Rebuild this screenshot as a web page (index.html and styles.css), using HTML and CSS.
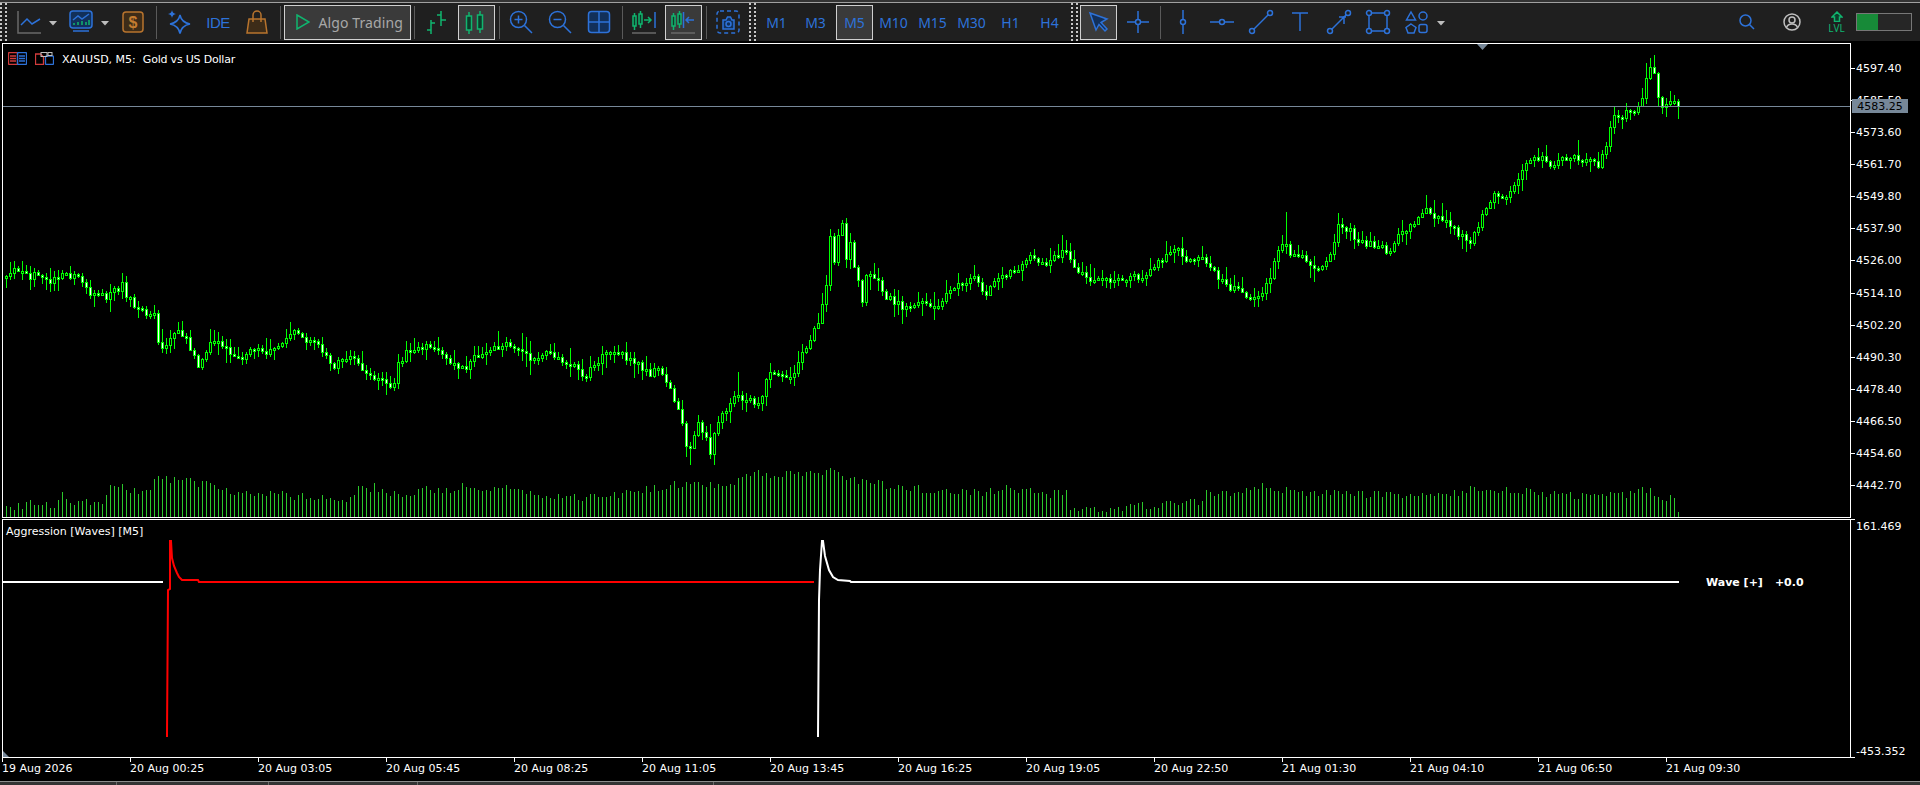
FILE: index.html
```html
<!DOCTYPE html>
<html lang="en">
<head>
    <meta charset="UTF-8">
    <title>XAUUSD, M5</title>
    <link rel="stylesheet" href="styles.css">
</head>
<body>
    <div class="topline"></div>
    <div class="toolbar">
        <div class="grip grip-first"></div>
        <div class="btn">
            <svg class="ico" viewBox="0 0 24 24"><path class="gray" d="M1 1V23H24"/><path class="blue" d="M4 15l6-6 5 5 8-5"/></svg>
        </div>
        <div class="caret"></div>
        <div class="btn">
            <svg class="ico" viewBox="0 0 24 24"><rect class="blue dark" x="1" y="1" width="22" height="17" rx="3"/><path class="green" d="M5 15v-2M9 15v-3M13 15v-4M17 15v-3M20 15v-5"/><path class="blue" d="M4 10l5-4 4 3 7-5M4 21h16"/></svg>
        </div>
        <div class="caret"></div>
        <div class="btn">
            <svg class="ico" viewBox="0 0 24 24"><rect class="orange brown" x="2" y="2" width="20" height="20" rx="3"/><text class="dollar" x="12" y="17.5">$</text></svg>
        </div>
        <div class="sep"></div>
        <div class="btn">
            <svg class="ico" viewBox="0 0 24 24"><path class="blue" d="M13 5Q14.5 12.5 23 14Q14.5 15.5 13 23.5Q11.5 15.5 3 14Q11.5 12.5 13 5z"/><path class="blue-fill" d="M5 0Q5.5 3.5 9 4Q5.5 4.5 5 8Q4.5 4.5 1 4Q4.5 3.5 5 0z"/></svg>
        </div>
        <div class="btn ide">IDE</div>
        <div class="btn">
            <svg class="ico" viewBox="0 0 24 24"><path class="orange brown" d="M4 9h16l2 14H2z"/><path class="orange" d="M8 12V5a4 4 0 0 1 8 0v7"/></svg>
        </div>
        <div class="sep"></div>
        <div class="algo">
            <svg class="play" viewBox="0 0 14 16"><path class="green" d="M1 1L13 8L1 15z"/></svg>
            <span>Algo Trading</span>
        </div>
        <div class="sep"></div>
        <div class="btn">
            <svg class="ico" viewBox="0 0 24 24"><path class="green" d="M6 10v14M6 13h4M2 20h4M16 1v15M12 5h4M16 10h5"/></svg>
        </div>
        <div class="btn">
            <div class="selected">
                <svg class="ico" viewBox="0 0 24 24"><path class="green" d="M5 2v4M5 20v4M16 1v4M16 19v4"/><rect class="green dark-green" x="2.5" y="6" width="5" height="14"/><rect class="green dark-green" x="13.5" y="5" width="5" height="14"/></svg>
            </div>
        </div>
        <div class="sep sep-tight"></div>
        <div class="btn">
            <svg class="ico" viewBox="0 0 24 24"><circle class="blue" cx="9.5" cy="9.5" r="8"/><path class="blue" d="M15.5 15.5L23 23M5.5 9.5h8M9.5 5.5v8"/></svg>
        </div>
        <div class="btn">
            <svg class="ico" viewBox="0 0 24 24"><circle class="blue" cx="9.5" cy="9.5" r="8"/><path class="blue" d="M15.5 15.5L23 23M5.5 9.5h8"/></svg>
        </div>
        <div class="btn">
            <svg class="ico" viewBox="0 0 24 24"><rect class="blue dark" x="1.5" y="1.5" width="21" height="21" rx="3"/><path class="blue" d="M12 1.5v21M1.5 12h21"/></svg>
        </div>
        <div class="sep sep-tight"></div>
        <div class="btn">
            <svg class="ico" viewBox="0 0 24 24"><path class="green" d="M2.5 3v17M8.5 1v17M12 10h7M16 7l3 3-3 3"/><rect class="green dark-green" x="1" y="6" width="3" height="10"/><rect class="green dark-green" x="7" y="4" width="3" height="10"/><path class="blue" d="M23 2v16"/><path class="gray" d="M0 23h24"/></svg>
        </div>
        <div class="btn">
            <div class="selected">
                <svg class="ico" viewBox="0 0 24 24"><path class="green" d="M2.5 3v17M8.5 1v17"/><rect class="green dark-green" x="1" y="6" width="3" height="10"/><rect class="green dark-green" x="7" y="4" width="3" height="10"/><path class="blue" d="M12.5 2v16M23 10h-8M18 7l-3 3 3 3"/><path class="gray" d="M0 23h24"/></svg>
            </div>
        </div>
        <div class="sep sep-tight"></div>
        <div class="btn">
            <svg class="ico" viewBox="0 0 24 24"><rect class="blue dashed" x="1" y="1" width="22" height="22" rx="3"/><path class="blue dark" d="M7 10h3l1.5-3h3l1.5 3h2v9H7z"/><circle class="blue" cx="12.5" cy="14" r="2.5"/></svg>
        </div>
        <div class="grip"></div>
        <div class="btn tf">M1</div>
        <div class="btn tf">M3</div>
        <div class="btn tf"><div class="selected">M5</div></div>
        <div class="btn tf">M10</div>
        <div class="btn tf">M15</div>
        <div class="btn tf">M30</div>
        <div class="btn tf">H1</div>
        <div class="btn tf">H4</div>
        <div class="grip grip-wide"></div>
        <div class="btn">
            <div class="selected">
                <svg class="ico" viewBox="0 0 24 24"><path class="blue dark" d="M3 3L20 9L14 12.5L20 19L18 21L12 14.5L9 20z"/></svg>
            </div>
        </div>
        <div class="btn">
            <svg class="ico" viewBox="0 0 24 24"><path class="blue" d="M12 1v22M1 12h22"/><circle class="blue on-bar" cx="12" cy="12" r="2.5"/></svg>
        </div>
        <div class="sep sep-line"></div>
        <div class="btn">
            <svg class="ico" viewBox="0 0 24 24"><path class="blue" d="M12 0v24"/><circle class="blue on-bar" cx="12" cy="12" r="2.5"/></svg>
        </div>
        <div class="btn">
            <svg class="ico" viewBox="0 0 24 24"><path class="blue" d="M0 12h24"/><circle class="blue on-bar" cx="12" cy="12" r="2.5"/></svg>
        </div>
        <div class="btn">
            <svg class="ico" viewBox="0 0 24 24"><path class="blue" d="M3 21L21 3"/><circle class="blue on-bar" cx="3" cy="21" r="2.5"/><circle class="blue on-bar" cx="21" cy="3" r="2.5"/></svg>
        </div>
        <div class="btn">
            <svg class="ico" viewBox="0 0 24 24"><path class="blue" d="M4 3h16M12 3v18"/></svg>
        </div>
        <div class="btn">
            <svg class="ico" viewBox="0 0 24 24"><path class="blue" d="M3 21L21 3M12 7h7M17 6v8"/><circle class="blue on-bar" cx="3" cy="21" r="2.5"/><circle class="blue on-bar" cx="21" cy="3" r="2.5"/></svg>
        </div>
        <div class="btn">
            <svg class="ico" viewBox="0 0 24 24"><path class="blue" d="M3 3h18v18H3z"/><circle class="blue on-bar" cx="3" cy="3" r="2.5"/><circle class="blue on-bar" cx="21" cy="3" r="2.5"/><circle class="blue on-bar" cx="3" cy="21" r="2.5"/><circle class="blue on-bar" cx="21" cy="21" r="2.5"/></svg>
        </div>
        <div class="btn">
            <svg class="ico" viewBox="0 0 24 24"><path class="blue" d="M6 2l4.500 8h-9z"/><circle class="blue" cx="18" cy="6" r="4"/><path class="blue" d="M6 14l5 3.500-2 5.500H3l-2-5.500z"/><rect class="blue" x="14" y="14.500" width="8" height="8" rx="2"/></svg>
        </div>
        <div class="caret"></div>
        <div class="toolbar-right">
            <div class="btn">
                <svg class="ico ico-small" viewBox="0 0 16 16"><circle class="blue" cx="6.500" cy="6.500" r="5.500"/><path class="blue" d="M10.500 10.500L15 15"/></svg>
            </div>
            <div class="btn">
                <svg class="ico ico-user" viewBox="0 0 18 18"><circle class="light" cx="9" cy="9" r="8"/><circle class="light" cx="9" cy="7" r="3"/><path class="light" d="M3.500 14.500c1-3 3-3.500 5.500-3.500s4.500.5 5.500 3.500"/></svg>
            </div>
            <div class="btn lvl">
                <svg class="lvl-arrow" viewBox="0 0 12 11"><path class="green dark-green" d="M6 1L11 6H8.500V10.500H3.500V6H1z"/></svg>
                <span>LVL</span>
            </div>
            <div class="meter"><div class="meter-fill"></div></div>
        </div>
    </div>

    <div class="workspace">
        <div class="row">
            <div class="pane pane-main">
                <svg id="priceChart" class="plot" viewBox="3 44 1847 473"></svg>
                <div class="chart-title">
                    <svg class="title-ico" viewBox="0 0 19 13"><rect class="title-red" x=".5" y=".5" width="9" height="12" rx="1"/><rect class="title-blue" x="9.500" y=".5" width="9" height="12" rx="1"/><path class="title-red" d="M2 4h6M2 6.500h6M2 9h6"/><path class="title-blue" d="M11 4h6M11 6.500h6M11 9h6"/></svg>
                    <svg class="title-ico" viewBox="0 0 19 13"><path class="title-red" d="M.5 2h5l3 3v7.500h-8z"/><rect class="title-blue" x="10.500" y="4" width="8" height="8.500" rx="1"/><rect class="title-gray" x="6" y=".5" width="6" height="4"/><rect class="title-gray" x="13" y=".5" width="4" height="3"/></svg>
                    <span class="title-text">XAUUSD, M5:&nbsp; <span class="title-name">Gold vs US Dollar</span></span>
                </div>
                <div class="shift-mark"></div>
                <div class="price-line"></div>
            </div>
            <div class="price-axis">
                <div class="tick">4597.40</div>
                <div class="tick">4585.50</div>
                <div class="tick">4573.60</div>
                <div class="tick">4561.70</div>
                <div class="tick">4549.80</div>
                <div class="tick">4537.90</div>
                <div class="tick">4526.00</div>
                <div class="tick">4514.10</div>
                <div class="tick">4502.20</div>
                <div class="tick">4490.30</div>
                <div class="tick">4478.40</div>
                <div class="tick">4466.50</div>
                <div class="tick">4454.60</div>
                <div class="tick">4442.70</div>
                <div class="current-price">4583.25</div>
            </div>
        </div>
        <div class="row row-sub">
            <div class="pane pane-sub">
                <svg class="plot" viewBox="3 520 1847 237">
                    <polyline class="wave wave-white" points="3,582 163,582"/>
                    <polyline class="wave wave-red" points="166,736 167,736 168,590 170,589 170,541 171,541 172,558 174,566 177,573 179,577 182,580 198,580 199,582 814,582"/>
                    <polyline class="wave wave-white" points="817,736 818,736 819,600 820,570 822,541 823,541 825,556 829,570 833,577 838,580 850,581 851,582 1679,582"/>
                </svg>
                <div class="sub-title">Aggression [Waves] [M5]</div>
                <div class="wave-label"><span>Wave [+]</span><span>+0.0</span></div>
                <div class="corner-mark"></div>
            </div>
            <div class="sub-axis">
                <div>161.469</div>
                <div>-453.352</div>
            </div>
        </div>
        <div class="time-axis">
            <div>19 Aug 2026</div>
            <div>20 Aug 00:25</div>
            <div>20 Aug 03:05</div>
            <div>20 Aug 05:45</div>
            <div>20 Aug 08:25</div>
            <div>20 Aug 11:05</div>
            <div>20 Aug 13:45</div>
            <div>20 Aug 16:25</div>
            <div>20 Aug 19:05</div>
            <div>20 Aug 22:50</div>
            <div>21 Aug 01:30</div>
            <div>21 Aug 04:10</div>
            <div>21 Aug 06:50</div>
            <div>21 Aug 09:30</div>
        </div>
    </div>
    <div class="tabs">
        <div class="tab tab-a"></div>
        <div class="tab tab-b"></div>
        <div class="tab tab-c"></div>
        <div class="tab tab-d"></div>
    </div>
    <script src="chart.js"></script>
</body>
</html>
```

FILE: styles.css
```css
* {
    box-sizing: border-box;
}
body {
    margin: 0;
    width: 1920px;
    height: 785px;
    overflow: hidden;
    background: #000;
    color: #fff;
    font-family: "DejaVu Sans", sans-serif;
    font-size: 11px;
}

/* toolbar */
.topline {
    height: 3px;
    background: #333;
    border-bottom: 1px solid #a0a0a0;
}
.toolbar {
    display: flex;
    align-items: center;
    height: 38px;
    background: #1f1f1f;
    font-family: "Noto Sans", sans-serif;
}
.btn {
    display: flex;
    flex: none;
    justify-content: center;
    align-items: center;
    width: 39px;
    height: 36px;
}
.selected {
    display: flex;
    justify-content: center;
    align-items: center;
    width: 37px;
    height: 35px;
    background: #3a3a3a;
    border: 1px solid #d0d0d0;
}
.ico {
    width: 24px;
    height: 24px;
    overflow: visible;
}
.ico-small {
    width: 16px;
    height: 16px;
}
.ico-user {
    width: 18px;
    height: 18px;
}
.grip {
    flex: none;
    align-self: stretch;
    width: 9.5px;
    background-image:
        repeating-linear-gradient(#c8c8c8 0 2px, transparent 2px 4px),
        repeating-linear-gradient(#c8c8c8 0 2px, transparent 2px 4px);
    background-size: 2px 100%;
    background-position: 1px 0, 6px 0;
    background-repeat: no-repeat;
}
.grip-first {
    background-position: 0 0, 5px 0;
}
.grip-wide {
    width: 10px;
    background-position: 2px 0, 7px 0;
}
.caret {
    flex: none;
    width: 13px;
    height: 5px;
    margin-top: 2px;
    clip-path: polygon(0 0, 9px 0, 4.5px 5px);
    background: #bdbdbd;
}
.sep {
    position: relative;
    flex: none;
    width: 7px;
    height: 33px;
}
.sep::after {
    content: "";
    position: absolute;
    left: 3px;
    top: 0;
    bottom: 0;
    width: 1px;
    background: #5a5a5a;
}
.sep-tight {
    width: 6px;
}
.sep-line {
    width: 6.5px;
}
.ide {
    color: #2d72d9;
    font-family: "Liberation Sans", sans-serif;
    font-size: 15px;
    letter-spacing: -.5px;
}
.algo {
    display: flex;
    flex: none;
    align-items: center;
    gap: 9px;
    width: 127px;
    height: 35px;
    padding-left: 11px;
    background: #3a3a3a;
    border: 1px solid #d0d0d0;
    color: #a8a8a8;
    font-size: 14px;
    letter-spacing: .1px;
    white-space: nowrap;
}
.play {
    width: 14px;
    height: 16px;
    flex: none;
}
.tf {
    color: #2d72d9;
    font-size: 14px;
}
.toolbar-right {
    display: flex;
    align-items: center;
    margin-left: auto;
    padding-right: 8px;
}
.toolbar-right .btn + .btn {
    margin-left: 6px;
}
.lvl {
    flex-direction: column;
    color: #10b56f;
    font-size: 10px;
    line-height: 10px;
}
.lvl-arrow {
    width: 12px;
    height: 11px;
    margin-bottom: 1px;
}
.meter {
    width: 56px;
    height: 18px;
    background: #262626;
    border: 1px solid #777;
}
.meter-fill {
    width: 21px;
    height: 100%;
    background: #178a38;
}

/* svg strokes */
.gray, .blue, .green, .orange, .light, .title-red, .title-blue, .title-gray {
    fill: none;
    stroke-width: 1.5;
}
.gray { stroke: #6a6a6a; }
.blue { stroke: #2d72d9; }
.green { stroke: #10b56f; }
.orange { stroke: #b8742e; }
.light { stroke: #c0c0c0; }
.dark { fill: #12305a; }
.brown { fill: #3d2c18; }
.dark-green { fill: #0c3d2a; }
.on-bar { fill: #1f1f1f; }
.blue-fill { fill: #2d72d9; }
.dashed { stroke-dasharray: 4 3; }
.dollar {
    fill: #c47c30;
    font-family: "Liberation Sans", sans-serif;
    font-size: 16px;
    font-weight: bold;
    text-anchor: middle;
}
.title-red { stroke: #d23c3c; stroke-width: 1.3; }
.title-blue { stroke: #2d72d9; stroke-width: 1.3; }
.title-gray { stroke: #c0c0c0; stroke-width: 1; }

/* charts */
.workspace {
    margin-top: 2px;
    padding-left: 2px;
}
.row {
    display: flex;
    height: 475px;
}
.row-sub {
    height: 239px;
    margin-top: 1px;
}
.pane {
    position: relative;
    flex: none;
    width: 1849px;
    height: 100%;
    border: 1px solid #fff;
}
.plot {
    display: block;
    width: 1847px;
    height: 100%;
}
.chart-title {
    position: absolute;
    left: 5px;
    top: 7px;
    display: flex;
    align-items: center;
    gap: 8px;
    white-space: pre;
}
.title-text {
    margin-top: 2px;
}
.title-name {
    letter-spacing: -.2px;
}
.title-ico {
    width: 19px;
    height: 13px;
}
.shift-mark {
    position: absolute;
    left: 1474px;
    top: 0;
    width: 11px;
    height: 6px;
    background: #778899;
    clip-path: polygon(0 0, 100% 0, 50% 100%);
}
.price-line {
    position: absolute;
    left: 0;
    right: 0;
    top: 62px;
    height: 1px;
    background: #778899;
}
.price-axis {
    position: relative;
    flex: 1;
    padding-top: 9px;
}
.tick {
    position: relative;
    height: 32.08px;
    padding-left: 5px;
    line-height: 34px;
}
.tick::before {
    content: "";
    position: absolute;
    left: 0;
    top: 16px;
    width: 4px;
    height: 1px;
    background: #fff;
}
.current-price {
    position: absolute;
    left: 1px;
    top: 56px;
    width: 56px;
    height: 14px;
    background: #778899;
    color: #000;
    line-height: 15px;
    text-align: center;
}
.sub-title {
    position: absolute;
    left: 3px;
    top: 5px;
}
.wave {
    fill: none;
    stroke-width: 2;
}
.wave-white { stroke: #fff; }
.wave-red { stroke: #f00; }
.wave-label {
    position: absolute;
    left: 1703px;
    top: 56px;
    display: flex;
    gap: 12px;
    font-weight: bold;
    line-height: 14px;
}
.corner-mark {
    position: absolute;
    left: 0;
    bottom: 0;
    width: 6px;
    height: 6px;
    background: #778899;
    clip-path: polygon(0 0, 100% 100%, 0 100%);
}
.sub-axis {
    position: relative;
    display: flex;
    flex: 1;
    flex-direction: column;
    justify-content: space-between;
    padding: 1px 0 0 5px;
    line-height: 14px;
}
.sub-axis div:last-child {
    margin-bottom: -1px;
}
.sub-axis::before, .sub-axis::after {
    content: "";
    position: absolute;
    left: 0;
    width: 4px;
    height: 1px;
    background: #fff;
}
.sub-axis::before { top: 0; }
.sub-axis::after { bottom: 0; }
.time-axis {
    display: grid;
    grid-template-columns: repeat(14, 128px);
    height: 23px;
}
.time-axis div {
    position: relative;
    padding-top: 4px;
    line-height: 14px;
    white-space: nowrap;
}
.time-axis div::before {
    content: "";
    position: absolute;
    left: 0;
    top: 0;
    width: 1px;
    height: 4px;
    background: #fff;
}

/* bottom tabs */
.tabs {
    display: flex;
    height: 4px;
    background: #333;
    border-top: 1px solid #8c8c8c;
}
.tab {
    border-right: 1px solid #6a6a6a;
}
.tab-a { width: 117px; }
.tab-b { width: 152px; }
.tab-c { width: 149px; }
.tab-d { width: 296px; }
```

FILE: chart.js
```js
// close price path read off the chart, page coordinates [x, y]
const PRICE_PATH = [
    [6,277],[15,268],[27,277],[38,275],[46,281],[61,277],[67,273],[78,278],[90,292],[107,297],
    [122,285],[128,298],[142,310],[155,317],[159,347],[168,343],[176,327],[187,340],[199,368],[207,347],
    [214,338],[224,350],[245,357],[254,347],[264,352],[279,342],[297,332],[302,338],[318,342],[323,355],
    [333,365],[350,357],[358,363],[373,380],[394,385],[398,363],[408,350],[425,346],[446,357],[467,372],
    [471,358],[482,357],[505,342],[517,352],[532,358],[551,352],[566,362],[585,375],[602,357],[611,348],
    [623,355],[650,373],[657,367],[671,390],[682,420],[686,443],[690,445],[694,433],[698,420],[702,430],
    [706,440],[710,457],[714,430],[722,413],[736,397],[759,403],[768,373],[793,375],[803,353],[818,320],
    [826,287],[830,234],[834,264],[838,237],[842,223],[846,257],[850,243],[854,266],[858,280],[862,300],
    [866,277],[875,275],[887,297],[906,308],[925,302],[937,307],[950,287],[977,277],[983,297],[994,282],
    [1017,267],[1030,258],[1044,267],[1065,250],[1075,267],[1094,280],[1117,280],[1143,275],[1163,258],[1178,247],
    [1187,263],[1202,257],[1210,264],[1215,274],[1222,281],[1230,287],[1247,296],[1255,301],[1258,299],[1267,284],
    [1275,261],[1283,241],[1287,241],[1290,257],[1295,252],[1307,261],[1315,271],[1323,264],[1333,247],[1338,227],
    [1350,231],[1355,241],[1373,244],[1383,244],[1387,252],[1400,234],[1417,219],[1427,207],[1433,217],[1447,221],
    [1455,231],[1470,244],[1475,231],[1487,207],[1495,191],[1507,201],[1513,187],[1523,171],[1533,156],[1547,161],
    [1553,169],[1563,156],[1577,159],[1598,164],[1607,141],[1613,119],[1623,114],[1633,111],[1643,99],[1647,72],
    [1651,62],[1655,80],[1658,95],[1663,109],[1670,104],[1674,102],[1679,107]
];

// volume bar height along the x axis
const VOLUME_PATH = [
    [6,10],[24,11],[30,13],[45,12],[56,10],[60,24],[66,17],[80,14],[100,13],[106,20],[108,33],[112,35],
    [125,31],[132,25],[150,26],[157,41],[170,38],[185,40],[195,32],[215,33],[225,26],[250,25],[285,22],
    [300,21],[320,19],[350,18],[358,28],[375,30],[385,24],[400,21],[420,28],[440,25],[470,32],[480,25],
    [497,31],[515,26],[540,23],[575,20],[600,19],[630,24],[680,33],[700,32],[730,31],[757,44],[775,41],
    [830,46],[860,36],[900,30],[960,24],[985,25],[1000,29],[1050,22],[1068,28],[1070,8],[1100,6],[1125,10],
    [1150,12],[1180,14],[1200,14],[1206,24],[1240,24],[1261,32],[1300,24],[1335,25],[1400,20],[1450,22],
    [1475,30],[1500,27],[1550,23],[1590,21],[1620,21],[1646,27],[1660,20],[1674,18],[1678,2]
];

// long wicks that stand out on the chart: bar x and the y they reach
const LONG_WICKS = {
    122: 273, 690: 465, 738: 372, 842: 220, 902: 324, 1286: 212, 1654: 55
};

const FIRST_X = 6;
const LAST_X = 1678;
const BASELINE = 517;

let seed = 20260821;
function random() {
    seed = (seed * 1664525 + 1013904223) % 4294967296;
    return seed / 4294967296;
}

function lookup(path, x) {
    for (let i = 1; i < path.length; i++) {
        if (x <= path[i][0]) {
            const [x0, y0] = path[i - 1];
            const [x1, y1] = path[i];
            return y0 + (y1 - y0) * (x - x0) / (x1 - x0);
        }
    }
    return path[path.length - 1][1];
}

function box(x, y, w, h) {
    return `M${x} ${y}h${w}v${h}h${-w}z`;
}

function addPath(svg, d, fill) {
    const el = document.createElementNS('http://www.w3.org/2000/svg', 'path');
    el.setAttribute('d', d);
    el.setAttribute('fill', fill);
    el.setAttribute('shape-rendering', 'crispEdges');
    svg.appendChild(el);
}

function drawChart() {
    const svg = document.getElementById('priceChart');
    let volumes = '';
    let greens = '';
    let blacks = '';
    let whites = '';
    let open = lookup(PRICE_PATH, FIRST_X);

    for (let x = FIRST_X; x <= LAST_X; x += 4) {
        const close = Math.round(lookup(PRICE_PATH, x) + (random() - 0.5) * 7);
        const top = Math.min(open, close);
        const bottom = Math.max(open, close);
        const height = Math.max(bottom - top, 2);
        let high = top - Math.round(random() * random() * 16) - 1;
        let low = top + height + Math.round(random() * random() * 16) + 1;

        const longWick = LONG_WICKS[x];
        if (longWick < top) high = longWick;
        if (longWick > bottom) low = longWick;

        greens += box(x, high, 1, low - high);
        greens += box(x - 1, top, 3, height + 1);
        if (close > open) {
            whites += box(x, top + 1, 1, height - 1);
        } else {
            blacks += box(x, top + 1, 1, height - 1);
        }

        const volume = Math.max(Math.round(lookup(VOLUME_PATH, x) + (random() - 0.5) * 8), 1);
        volumes += box(x, BASELINE - volume, 1, volume);
        open = close;
    }

    addPath(svg, volumes, '#2bc82b');
    addPath(svg, greens, '#00ff00');
    addPath(svg, blacks, '#000');
    addPath(svg, whites, '#fff');
}

drawChart();
```
